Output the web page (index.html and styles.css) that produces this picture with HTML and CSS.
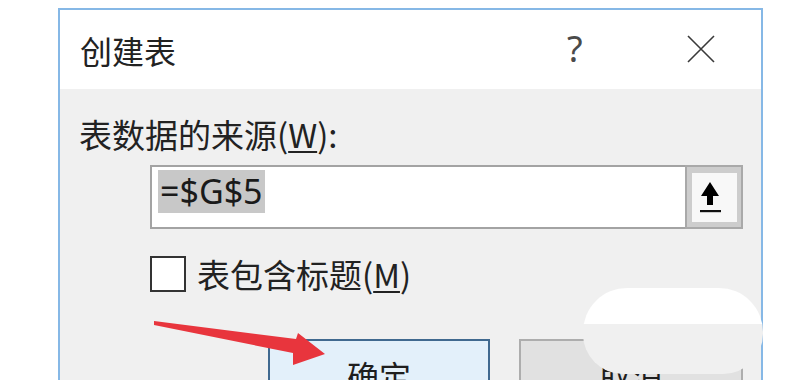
FILE: index.html
```html
<!DOCTYPE html>
<html lang="zh-CN">
<head>
<meta charset="utf-8">
<title>创建表</title>
<link rel="stylesheet" href="styles.css">
</head>
<body>
<div class="page">
  <div class="dialog">
    <div class="titlebar">
      <span class="title">创建表</span>
      <span class="help">?</span>
      <span class="close">
        <svg width="28" height="28" viewBox="0 0 28 28"><path d="M1 1 L27 27 M27 1 L1 27" stroke="#3a3a3a" stroke-width="1.6" fill="none"/></svg>
      </span>
    </div>
    <div class="content">
      <div class="label">表数据的来源(<u>W</u>):</div>
      <div class="input-row">
        <div class="input-field"><span class="selected">=$G$5</span></div>
        <div class="up-btn">
          <div class="up-inner">
            <svg width="44" height="49" viewBox="0 0 44 49">
              <path d="M18 9 L27 23 L21 23 L21 32 L15 32 L15 23 L9 23 Z" fill="#000"/>
              <rect x="8" y="37" width="21" height="2.2" fill="#111"/>
            </svg>
          </div>
        </div>
      </div>
      <div class="check-row">
        <span class="checkbox"></span>
        <span class="check-label">表包含标题(<u>M</u>)</span>
      </div>
      <div class="buttons">
        <div class="btn btn-ok">确定</div>
        <div class="btn btn-cancel">取消</div>
      </div>
    </div>
  </div>
  <svg class="red-arrow" width="808" height="380" viewBox="0 0 808 380">
    <polygon points="154,321 296,339 298,333 325,354 293,365 293,353 154,325" fill="#e8353d"/>
  </svg>
  <div class="blob"></div>
</div>
</body>
</html>
```

FILE: styles.css
```css
html, body {
  margin: 0;
  padding: 0;
  background: #ffffff;
  overflow: hidden;
  height: 380px;
}

.page {
  position: relative;
  width: 808px;
  height: 380px;
  padding: 8px 0 0 58px;
  box-sizing: border-box;
  font-family: "Noto Sans CJK SC", "Noto Sans", sans-serif;
  color: #1e1e1e;
}

.dialog {
  width: 705px;
  height: 420px;
  box-sizing: border-box;
  border: 2px solid #86b8e6;
  border-bottom: none;
  background: #f0f0f0;
  display: flex;
  flex-direction: column;
}

.titlebar {
  height: 79px;
  background: #ffffff;
  display: flex;
  align-items: center;
  padding: 0 46px 0 20px;
  flex-shrink: 0;
}

.title {
  font-size: 32px;
  line-height: 40px;
  flex: 1;
  color: #222;
}

.help {
  font-family: "Noto Sans", "DejaVu Sans", sans-serif;
  font-size: 36px;
  line-height: 40px;
  color: #4a4a4a;
  width: 120px;
  text-align: left;
  padding-bottom: 2px;
}

.close {
  display: flex;
  width: 28px;
  height: 28px;
  margin-top: -2px;
}

.content {
  padding: 24px 0 0 19px;
  display: flex;
  flex-direction: column;
}

.label {
  font-size: 33px;
  line-height: 42px;
  color: #222;
}

u {
  text-decoration-thickness: 2px;
  text-underline-offset: 3px;
}

.input-row {
  margin: 10px 0 0 71px;
  width: 593px;
  height: 64px;
  display: flex;
}

.input-field {
  flex: 1;
  box-sizing: border-box;
  border: 2px solid #a3a3a3;
  border-right: none;
  background: #ffffff;
  padding: 3px 0 0 6px;
}

.selected {
  display: inline-block;
  font-family: "Noto Sans", "Open Sans", sans-serif;
  font-size: 34px;
  line-height: 43px;
  height: 43px;
  padding: 0 2px 0 2px;
  background: #c8c8c8;
  color: #1a1a1a;
}

.up-btn {
  width: 58px;
  height: 64px;
  box-sizing: border-box;
  border: 2px solid #a9a9a9;
  background: #cdcdcd;
  padding: 6px 4px 5px 5px;
}

.up-inner {
  width: 100%;
  height: 100%;
  background: #f8f8f8;
  display: flex;
}

.check-row {
  margin: 25px 0 0 71px;
  display: flex;
  align-items: center;
  height: 40px;
  gap: 11px;
}

.checkbox {
  width: 36px;
  height: 36px;
  box-sizing: border-box;
  border: 2px solid #333;
  background: #fff;
}

.check-label {
  font-size: 33px;
  line-height: 40px;
  color: #222;
}

.buttons {
  margin: 45px 0 0 189px;
  display: flex;
  gap: 29px;
}

.btn {
  height: 64px;
  box-sizing: border-box;
  font-size: 32px;
  line-height: 40px;
  padding-top: 14px;
  text-align: center;
  color: #1e1e1e;
}

.btn-ok {
  width: 222px;
  border: 2px solid #40698f;
  background: #e3f0fa;
}

.btn-cancel {
  width: 224px;
  border: 2px solid #adadad;
  background: #e1e1e1;
}

.red-arrow {
  position: absolute;
  left: 0;
  top: 0;
  pointer-events: none;
}

.blob {
  position: absolute;
  left: 583px;
  top: 288px;
  width: 180px;
  height: 86px;
  border-radius: 44px 44px 40px 40px;
  background: linear-gradient(#ffffff 0, #ffffff 42%, #f0f0f0 42%, #f0f0f0 100%);
}
```
